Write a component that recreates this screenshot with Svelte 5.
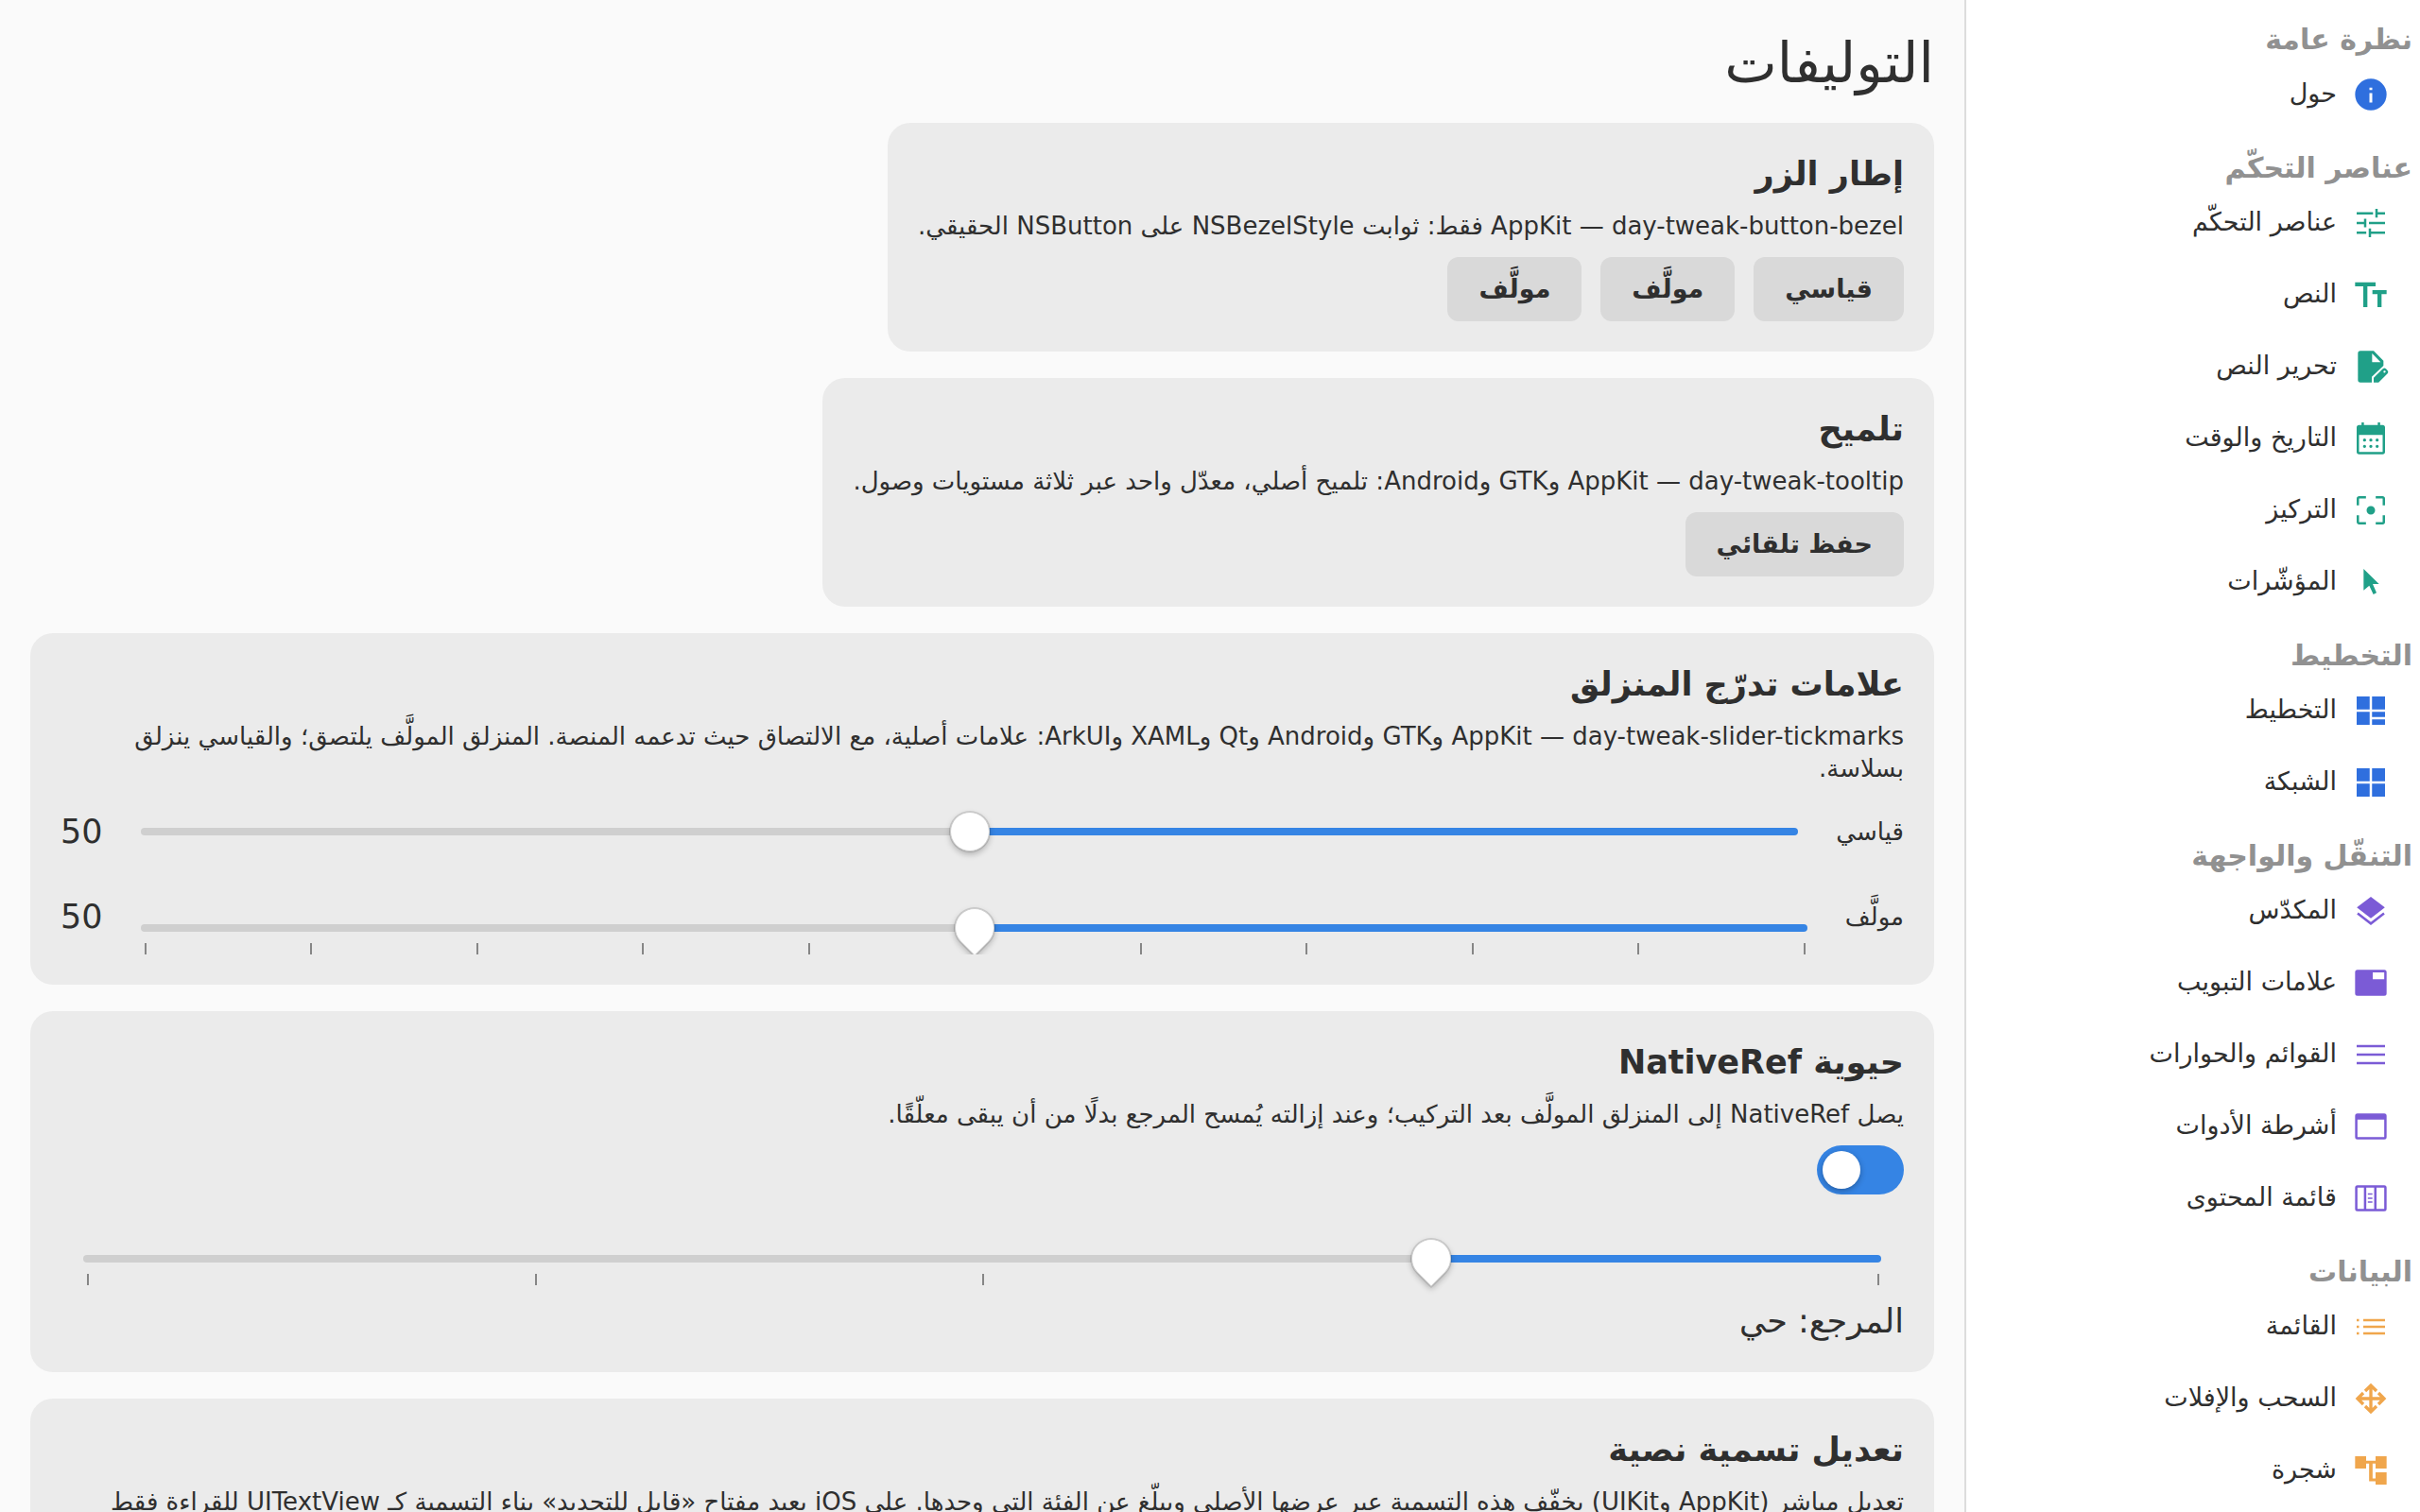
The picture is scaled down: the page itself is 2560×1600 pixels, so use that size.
<script>
  // embedded latin names are followed by a right-to-left mark so the dash keeps its side
  const rlm = '\u200F';

  const icons = {
    info: { solid: 'M12 2a10 10 0 1 0 0 20a10 10 0 0 0 0-20zM11.1 7.6h1.8v1.6h-1.8zM11.1 11.1h1.8v6h-1.8z' },
    tune: { line: 'M3 5.8h10.4M15.6 5.8H21M15.6 3v5.5M3 12h5.4M8.4 9.3v5.4M10.8 12H21M3 18.2h6.1M11.4 15.5V21M11.4 18.2H21' },
    text: { solid: 'M2 4h13v2.6H9.8v13.2H7.2V6.6H2zM13 9h9v2.5h-3.2v8.3h-2.6v-8.3H13z' },
    edit: {
      solid:
        'M5.4 2h8.4L20 8.2v3.2l-7.4 7.1V22H5.4A1.6 1.6 0 0 1 3.8 20.4V3.6A1.6 1.6 0 0 1 5.4 2zM12.8 3.6v5.5h5.4zM13.8 22v-3l5.8-5.6a1.5 1.5 0 0 1 2 0l1 1a1.5 1.5 0 0 1 0 2L16.9 22zM20.7 14.5a.7.7 0 1 0 0 1.4a.7.7 0 0 0 0-1.4z'
    },
    calendar: {
      solid:
        'M6.1 1.8h1.5v1.7h8.8V1.8h1.5v1.7h1.5A1.6 1.6 0 0 1 21 5.1v15.3a1.6 1.6 0 0 1-1.6 1.6H4.6A1.6 1.6 0 0 1 3 20.4V5.1a1.6 1.6 0 0 1 1.6-1.6h1.5zM4.5 9.8v10.7h15V9.8zM8 12a1 1 0 1 1 0 2a1 1 0 0 1 0-2zM12 12a1 1 0 1 1 0 2a1 1 0 0 1 0-2zM16 12a1 1 0 1 1 0 2a1 1 0 0 1 0-2zM8 16a1 1 0 1 1 0 2a1 1 0 0 1 0-2zM12 16a1 1 0 1 1 0 2a1 1 0 0 1 0-2zM16 16a1 1 0 1 1 0 2a1 1 0 0 1 0-2z'
    },
    focus: {
      solid: 'M12 9.3a2.7 2.7 0 1 0 0 5.4a2.7 2.7 0 0 0 0-5.4z',
      line: 'M8.9 3.75H4.6a.85.85 0 0 0-.85.85v4.3M15.1 3.75h4.3a.85.85 0 0 1 .85.85v4.3M8.9 20.25H4.6a.85.85 0 0 1-.85-.85v-4.3M15.1 20.25h4.3a.85.85 0 0 0 .85-.85v-4.3'
    },
    pointer: { solid: 'M7.4 3.6l9.8 9.6h-4l2.4 5.6-2 1-2.6-5.6-3.6 3z' },
    layout: { solid: 'M3 3h8.25v8.25H3zM12.75 3H21v8.25h-8.25zM3 12.75h8.25V21H3zM12.75 12.75H21v3.3h-8.25zM12.75 17.6H21V21h-8.25z' },
    grid: { solid: 'M3 3h8.25v8.25H3zM12.75 3H21v8.25h-8.25zM3 12.75h8.25V21H3zM12.75 12.75H21V21h-8.25z' },
    layers: { solid: 'M12 3l8.9 6.8-8.9 6.8-8.9-6.8z', line: 'M3.6 13.5l8.4 6.5 8.4-6.5' },
    tab: { solid: 'M3.5 3.8h17A1.5 1.5 0 0 1 22 5.3v13.4a1.5 1.5 0 0 1-1.5 1.5h-17A1.5 1.5 0 0 1 2 18.7V5.3a1.5 1.5 0 0 1 1.5-1.5zM13.2 5.4v4.4h7.3V5.4z' },
    menu: { line: 'M3 6.6h18M3 12h18M3 17.4h18' },
    toolbar: { solid: 'M3.5 3.8h17A1.5 1.5 0 0 1 22 5.3v13.4a1.5 1.5 0 0 1-1.5 1.5h-17A1.5 1.5 0 0 1 2 18.7V5.3a1.5 1.5 0 0 1 1.5-1.5zM3.5 7.6v11.1h17V7.6z' },
    panels: {
      solid:
        'M3.5 3.8h17A1.5 1.5 0 0 1 22 5.3v13.4a1.5 1.5 0 0 1-1.5 1.5h-17A1.5 1.5 0 0 1 2 18.7V5.3a1.5 1.5 0 0 1 1.5-1.5zM3.5 5.3v13.4h4.1V5.3zM9.1 5.3v13.4h5V5.3zM15.6 5.3v13.4h4.9V5.3zM10.1 8.9H13v.9h-2.9zM10.1 11.5H13v.9h-2.9zM10.1 14H13v.9h-2.9z'
    },
    list: { line: 'M3 7.8h1.5M7.2 7.8H21M3 12h1.5M7.2 12H21M3 16.2h1.5M7.2 16.2H21' },
    move: { line: 'M12 4v16M4 12h16M8.4 7.2L12 3.6l3.6 3.6M8.4 16.8l3.6 3.6 3.6-3.6M7.2 8.4L3.6 12l3.6 3.6M16.8 8.4l3.6 3.6-3.6 3.6', width: 2 },
    tree: { solid: 'M2 3h7v2.9h6V3h7v7.8h-7V7.7h-1.9v9.4H15v-3.9h7V21h-7v-2.1h-4.1V7.7H9v3.1H2z' }
  };

  const sections = [
    { title: 'نظرة عامة', color: 'blue', items: [['info', 'حول']] },
    {
      title: 'عناصر التحكّم',
      color: 'teal',
      items: [
        ['tune', 'عناصر التحكّم'],
        ['text', 'النص'],
        ['edit', 'تحرير النص'],
        ['calendar', 'التاريخ والوقت'],
        ['focus', 'التركيز'],
        ['pointer', 'المؤشّرات']
      ]
    },
    {
      title: 'التخطيط',
      color: 'blue',
      items: [
        ['layout', 'التخطيط'],
        ['grid', 'الشبكة']
      ]
    },
    {
      title: 'التنقّل والواجهة',
      color: 'purple',
      items: [
        ['layers', 'المكدّس'],
        ['tab', 'علامات التبويب'],
        ['menu', 'القوائم والحوارات'],
        ['toolbar', 'أشرطة الأدوات'],
        ['panels', 'قائمة المحتوى']
      ]
    },
    {
      title: 'البيانات',
      color: 'orange',
      items: [
        ['list', 'القائمة'],
        ['move', 'السحب والإفلات'],
        ['tree', 'شجرة']
      ]
    }
  ];

  let standard = $state(50);
  let tweaked = $state(50);
  let level = $state(25);
  let attached = $state(true);
</script>

{#snippet ticks(count)}
  <span class="ticks" aria-hidden="true">
    {#each Array(count) as _}
      <i></i>
    {/each}
  </span>
{/snippet}

<div class="app" dir="rtl" lang="ar">
  <nav>
    {#each sections as section}
      <h2>{section.title}</h2>
      <ul class={section.color}>
        {#each section.items as [icon, label]}
          <li>
            <a href="#{icon}">
              <svg viewBox="0 0 24 24" aria-hidden="true">
                {#if icons[icon].solid}
                  <path class="solid" d={icons[icon].solid} />
                {/if}
                {#if icons[icon].line}
                  <path class="line" d={icons[icon].line} stroke-width={icons[icon].width ?? 1.5} />
                {/if}
              </svg>
              <span>{label}</span>
            </a>
          </li>
        {/each}
      </ul>
    {/each}
  </nav>

  <main>
    <h1>التوليفات</h1>

    <section>
      <h3>إطار الزر</h3>
      <p>day-tweak-button-bezel{rlm} — AppKit فقط: ثوابت NSBezelStyle على NSButton الحقيقي.</p>
      <div class="buttons">
        <button type="button">قياسي</button>
        <button type="button">مولَّف</button>
        <button type="button">مولَّف</button>
      </div>
    </section>

    <section>
      <h3>تلميح</h3>
      <p>day-tweak-tooltip{rlm} — AppKit وGTK وAndroid: تلميح أصلي، معدّل واحد عبر ثلاثة مستويات وصول.</p>
      <div class="buttons">
        <button type="button">حفظ تلقائي</button>
      </div>
    </section>

    <section class="wide">
      <h3>علامات تدرّج المنزلق</h3>
      <p>
        day-tweak-slider-tickmarks{rlm} — AppKit وGTK وAndroid وQt وXAML وArkUI: علامات أصلية، مع الالتصاق حيث تدعمه
        المنصة. المنزلق المولَّف يلتصق؛ والقياسي ينزلق بسلاسة.
      </p>
      <div class="row">
        <label for="standard">قياسي</label>
        <div class="slider">
          <span class="bar" style="--fill: {standard}%"></span>
          <input id="standard" type="range" bind:value={standard} />
        </div>
        <output for="standard">{standard}</output>
      </div>
      <div class="row clipped">
        <label for="tweaked">مولَّف</label>
        <div class="slider marked">
          <span class="bar" style="--fill: {tweaked}%"></span>
          {@render ticks(11)}
          <input id="tweaked" type="range" step="10" bind:value={tweaked} />
        </div>
        <output for="tweaked">{tweaked}</output>
      </div>
    </section>

    <section class="wide">
      <h3>حيوية NativeRef</h3>
      <p>يصل NativeRef إلى المنزلق المولَّف بعد التركيب؛ وعند إزالته يُمسح المرجع بدلًا من أن يبقى معلّقًا.</p>
      <input class="switch" type="checkbox" role="switch" aria-label="المرجع" bind:checked={attached} />
      <div class="slider marked">
        <span class="bar" style="--fill: {level}%"></span>
        {@render ticks(5)}
        <input type="range" step="25" aria-label="المنزلق المولَّف" bind:value={level} />
      </div>
      <div class="status">المرجع: حي</div>
    </section>

    <section class="wide">
      <h3>تعديل تسمية نصية</h3>
      <p>
        تعديل مباشر (AppKit وUIKit) يخفّف هذه التسمية عبر عرضها الأصلي ويبلّغ عن الفئة التي وجدها. على iOS يعيد مفتاح
        «قابل للتحديد» بناء التسمية كـ UITextView للقراءة فقط
      </p>
    </section>
  </main>
</div>

<style>
  :global(body) {
    margin: 0;
    background: #fafafa;
  }

  .app {
    display: flex;
    height: 100vh;
    overflow: hidden;
    background: #fafafa;
    color: #2f2f2f;
    font-family: 'DejaVu Sans', sans-serif;
    font-size: 26px;
    line-height: 34px;
  }

  h1,
  h2,
  h3,
  p,
  ul {
    margin: 0;
    padding: 0;
  }

  nav {
    box-sizing: border-box;
    flex: 0 0 482px;
    padding-top: 2px;
    overflow-y: auto;
    scrollbar-width: none;
    background: #fff;
    border-left: 2px solid #dcdcdc;
  }

  nav h2 {
    padding: 20px 8px 0;
    color: #919191;
    font-size: 30px;
    line-height: 40px;
  }

  ul {
    list-style: none;
  }

  nav a {
    display: flex;
    align-items: center;
    gap: 16px;
    height: 76px;
    padding: 0 32px;
    color: #2f2f2f;
    font-size: 27px;
    text-decoration: none;
  }

  nav a span {
    padding-bottom: 2px;
  }

  svg {
    width: 40px;
    height: 40px;
  }

  .solid {
    fill: currentColor;
    fill-rule: evenodd;
  }

  .line {
    fill: none;
    stroke: currentColor;
  }

  .blue svg {
    color: #2f6fde;
  }

  .teal svg {
    color: #20a088;
  }

  .purple svg {
    color: #7b5bd6;
  }

  .orange svg {
    color: #f0a64c;
  }

  main {
    display: flex;
    flex: 1;
    flex-direction: column;
    align-items: flex-start;
    gap: 28px;
    min-width: 0;
    padding: 32px;
    overflow-y: auto;
    scrollbar-width: none;
  }

  h1 {
    font-size: 59px;
    font-weight: normal;
    line-height: 70px;
  }

  section {
    display: flex;
    flex-direction: column;
    flex-shrink: 0;
    gap: 16px;
    padding: 32px;
    background: #ebebeb;
    border-radius: 24px;
  }

  .wide {
    align-self: stretch;
  }

  h3,
  .status,
  output {
    font-size: 35px;
    line-height: 44px;
  }

  .buttons {
    display: flex;
    gap: 20px;
  }

  button {
    height: 68px;
    padding: 0 33px;
    border: 0;
    border-radius: 12px;
    background: #d9d9d9;
    color: inherit;
    font: inherit;
    font-size: 27px;
    font-weight: bold;
  }

  .row {
    display: flex;
    align-items: center;
    gap: 16px;
  }

  .clipped {
    overflow: hidden;
  }

  /* bar, ticks and input share one column, the input lies on top */
  .slider {
    display: grid;
    grid-template-rows: 32px;
    margin-inline: 6px 8px;
    padding: 18px 0;
  }

  .row .slider {
    flex: 1;
  }

  .slider.marked {
    grid-template-rows: 32px 12px;
    padding: 36px 0 0;
  }

  .bar {
    grid-area: 1 / 1;
    align-self: center;
    height: 8px;
    margin-inline: 18px 16px;
    border-radius: 4px;
    background: linear-gradient(to left, #3584e4 var(--fill), #cfcfcf var(--fill));
  }

  .ticks {
    grid-area: 2 / 1;
    display: flex;
    justify-content: space-between;
    padding: 0 20px;
  }

  .ticks i {
    width: 2px;
    background: #868686;
  }

  input[type='range'] {
    grid-area: 1 / 1;
    width: 100%;
    height: 32px;
    margin: 0;
    appearance: none;
    background: none;
  }

  input[type='range']::-webkit-slider-runnable-track {
    height: 8px;
  }

  input[type='range']::-webkit-slider-thumb {
    box-sizing: border-box;
    width: 42px;
    height: 42px;
    margin-top: -17px;
    appearance: none;
    border: 1px solid #cfcfcf;
    border-radius: 50%;
    background: #fff;
    box-shadow:
      0 0 0 1px rgba(0, 0, 0, 0.12),
      0 3px 6px rgba(0, 0, 0, 0.25);
  }

  .marked input[type='range']::-webkit-slider-thumb {
    border-radius: 50% 50% 0 50%;
    box-shadow:
      0 0 0 1px rgba(0, 0, 0, 0.12),
      2px 2px 6px rgba(0, 0, 0, 0.25);
    transform: rotate(45deg);
  }

  .switch {
    display: flex;
    align-items: center;
    box-sizing: border-box;
    width: 92px;
    height: 52px;
    margin: 0;
    padding: 6px;
    appearance: none;
    border-radius: 26px;
    background: #cfcfcf;
  }

  .switch::before {
    content: '';
    width: 40px;
    height: 40px;
    border-radius: 50%;
    background: #fff;
    box-shadow: 0 2px 6px rgba(0, 0, 0, 0.3);
  }

  .switch:checked {
    justify-content: flex-end;
    background: #3584e4;
  }
</style>
